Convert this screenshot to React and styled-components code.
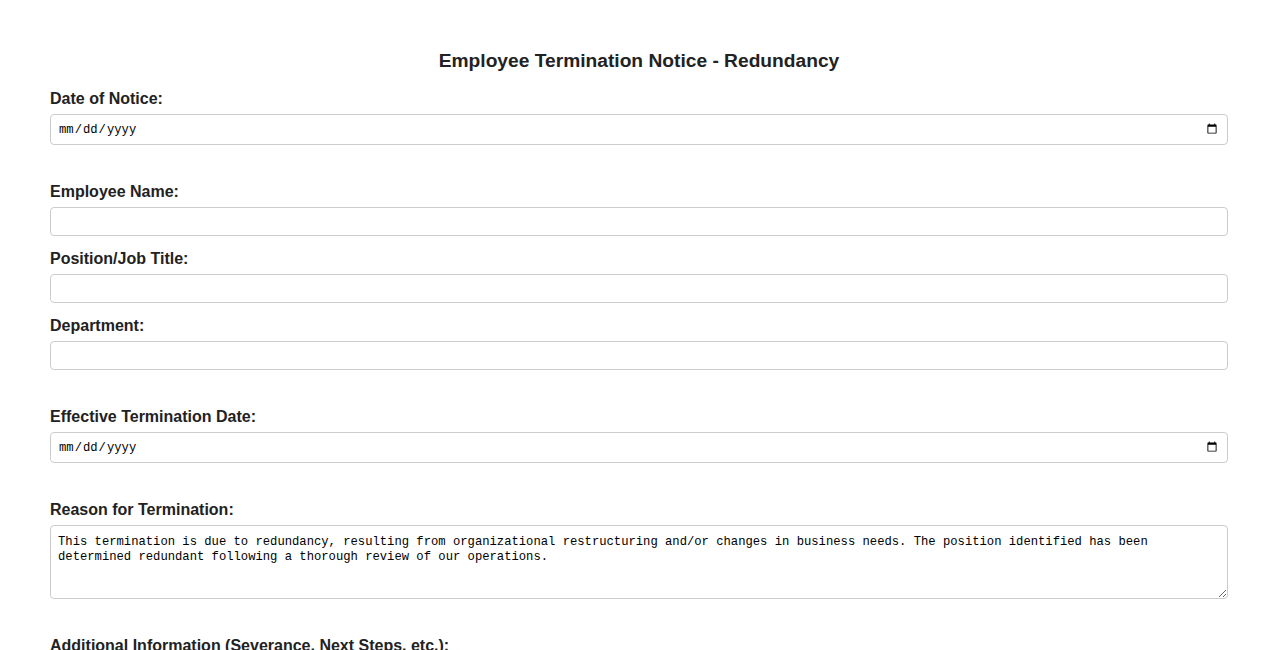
import React from "react";
import styled, { createGlobalStyle } from "styled-components";

const GlobalStyle = createGlobalStyle`
  body {
    margin: 0;
    background: #fff;
    font-family: "Liberation Sans", Arial, sans-serif;
    color: #222;
  }
`;

const REASON =
  "This termination is due to redundancy, resulting from organizational restructuring and/or changes in business needs. The position identified has been determined redundant following a thorough review of our operations.";

const App = () => {
  return (
    <Page>
      <GlobalStyle />
      <Title>Employee Termination Notice - Redundancy</Title>
      <Section>
        <Field>
          <Label>Date of Notice:</Label>
          <DateInput type="date" />
        </Field>
      </Section>
      <Section>
        <Field>
          <Label>Employee Name:</Label>
          <TextInput type="text" />
        </Field>
        <Field>
          <Label>Position/Job Title:</Label>
          <TextInput type="text" />
        </Field>
        <Field>
          <Label>Department:</Label>
          <TextInput type="text" />
        </Field>
      </Section>
      <Section>
        <Field>
          <Label>Effective Termination Date:</Label>
          <DateInput type="date" />
        </Field>
      </Section>
      <Section>
        <Field>
          <Label>Reason for Termination:</Label>
          <TextArea defaultValue={REASON} />
        </Field>
      </Section>
      <Section>
        <Field>
          <Label>Additional Information (Severance, Next Steps, etc.):</Label>
          <TextArea />
        </Field>
      </Section>
    </Page>
  );
};

export default App;

const Page = styled.form`
  padding: 49px 50px 40px;
`;

const Title = styled.h2`
  margin: 0 0 18px;
  text-align: center;
  font-size: 19.2px;
  line-height: 23px;
  font-weight: bold;
  color: #222;
`;

const Section = styled.div`
  margin-bottom: 38px;
`;

const Field = styled.div`
  margin-bottom: 14px;
`;

const Label = styled.label`
  display: block;
  font-size: 16px;
  line-height: 18px;
  font-weight: bold;
  color: #222;
  margin-bottom: 6px;
`;

const baseInput = `
  display: block;
  width: 100%;
  box-sizing: border-box;
  border: 1px solid #ccc;
  border-radius: 4px;
  background: #fff;
  padding: 0 7px;
  color: #000;
  outline: none;
`;

const TextInput = styled.input`
  ${baseInput}
  height: 29px;
  font-family: "Liberation Sans", Arial, sans-serif;
  font-size: 13px;
`;

const DateInput = styled.input`
  ${baseInput}
  height: 31px;
  font-family: "Liberation Mono", monospace;
  font-size: 12.2px;
`;

const TextArea = styled.textarea`
  ${baseInput}
  height: 74px;
  padding: 9px 7px 7px;
  font-family: "Liberation Mono", monospace;
  font-size: 12.2px;
  line-height: 15px;
`;
